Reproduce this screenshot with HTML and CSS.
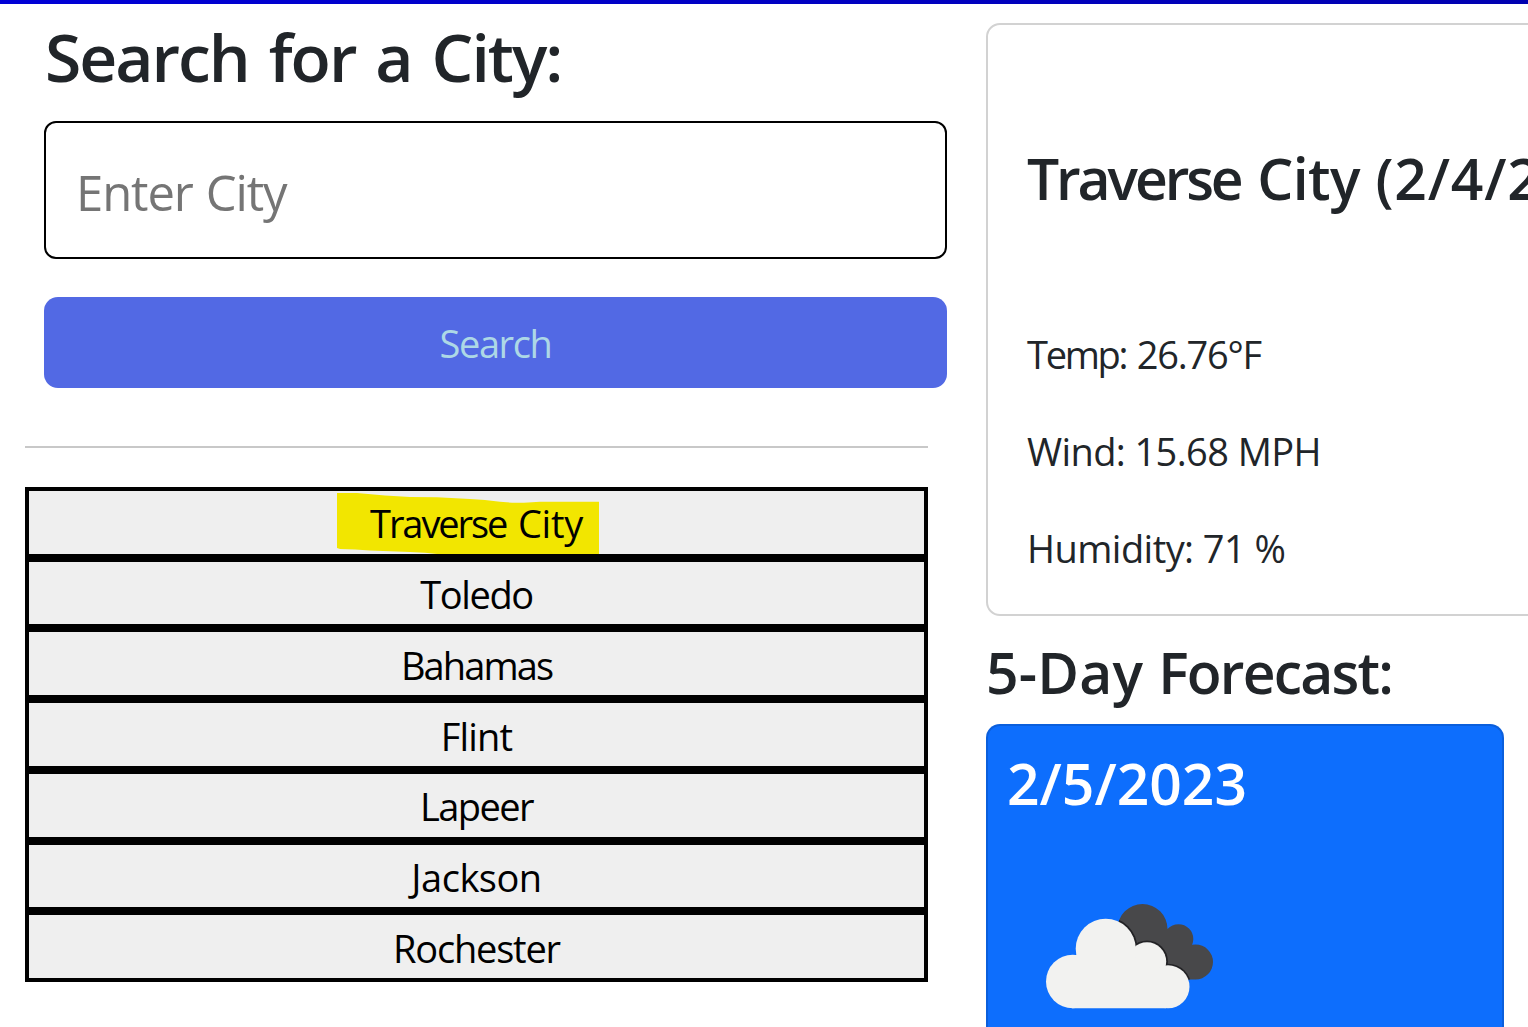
FILE: index.html
```html
<!DOCTYPE html>
<html lang="en">
<head>
<meta charset="utf-8">
<title>Weather Dashboard</title>
<link rel="stylesheet" href="styles.css">
</head>
<body>
<header class="banner"></header>
<main class="layout">
  <aside class="sidebar">
    <form class="search">
      <h1 class="search-title">Search for a City:</h1>
      <input class="search-input" type="text" placeholder="Enter City">
      <button class="search-button" type="button">Search</button>
    </form>
    <hr class="divider">
    <div class="history">
      <button class="city">
        <svg class="marker" viewBox="337 491 262 63"><path d="M337 493H357L385 495.500 410 497 437 497.200 470 499 485 500 500 501.800 512 502.700H524L540 501.800H599V554H437L425 552.800 410 552 390 551.300 370 550.500 355 549.500 340 549 337 548Z" fill="#f2e600"/></svg>
        <span class="label"><span class="t-traverse">Traverse </span><span class="t-city">City</span></span>
      </button>
      <button class="city"><span class="label t-toledo">Toledo</span></button>
      <button class="city"><span class="label t-bahamas">Bahamas</span></button>
      <button class="city"><span class="label t-flint">Flint</span></button>
      <button class="city"><span class="label t-lapeer">Lapeer</span></button>
      <button class="city"><span class="label t-jackson">Jackson</span></button>
      <button class="city"><span class="label t-rochester">Rochester</span></button>
    </div>
  </aside>
  <section class="content">
    <article class="today">
      <h2 class="today-title"><span class="h-traverse">Traverse </span><span class="h-city">City </span><span class="h-date">(2/4/2023)</span></h2>
      <p class="reading r-temp"><span class="r-label">Temp: </span>26.76°F</p>
      <p class="reading r-wind">Wind: 15.68 MPH</p>
      <p class="reading r-humidity">Humidity: 71 %</p>
    </article>
    <h2 class="forecast-title"><span class="h-five">5-Day </span>Forecast:</h2>
    <article class="day">
      <h3 class="day-date">2/5/2023</h3>
      <svg class="day-icon" viewBox="0 0 220 147">
        <clipPath id="rear"><circle cx="122.500" cy="49" r="25"/><circle cx="158.500" cy="59" r="14.800"/><circle cx="175.500" cy="82" r="17.500"/><path d="M110 50H150L175 70V99.500H120Z"/></clipPath>
        <g clip-path="url(#rear)">
          <rect x="90" y="20" width="110" height="90" fill="#48484a"/>
          <g fill="#222225"><circle cx="85.700" cy="68.700" r="31.800"/><circle cx="127" cy="81.500" r="21"/><circle cx="148" cy="107" r="23.300"/></g>
        </g>
        <g fill="#f2f2f0"><circle cx="52.800" cy="101.500" r="26.800"/><circle cx="85.700" cy="68.700" r="30"/><circle cx="127" cy="81.500" r="19.200"/><circle cx="148" cy="106.800" r="21.500"/><path d="M52 128.300V75H110L146 90V128.300Z"/></g>
      </svg>
    </article>
  </section>
</main>
</body>
</html>
```
FILE: styles.css
```css
* { box-sizing: border-box; }
html, body { height: 100%; }
body {
  margin: 0;
  overflow: hidden;
  background: #fff;
  color: #212529;
  font-family: "Open Sans", "Noto Sans", sans-serif;
  font-size: 38px;
}
h1, h2, h3, p { margin: 0; white-space: nowrap; }
h1, h2, h3 { font-weight: 600; }
p { font-weight: 400; }
button, input { font: inherit; }
.banner { height: 4px; background: linear-gradient(90deg, #0000d6, #0000b0); }
.layout { display: flex; align-items: flex-start; height: 1023px; overflow: hidden; }
.sidebar { flex: none; width: 986px; padding: 12px 0 0 25px; }
.search { display: flex; flex-direction: column; width: 903px; margin-left: 19px; }
.search-title { padding-left: 1px; font-size: 66px; line-height: 80px; letter-spacing: -2px; word-spacing: 4.8px; }
.search-input {
  height: 138px;
  margin-top: 25px;
  padding: 3px 30px 0;
  border: 2px solid #000;
  border-radius: 12px;
  background: #fff;
  font-size: 49px;
  letter-spacing: -1.1px;
  word-spacing: 1.3px;
}
.search-input::placeholder { color: #757575; opacity: 1; }
.search-button {
  height: 91px;
  margin-top: 38px;
  padding: 1px 0 0;
  border: 0;
  border-radius: 14px;
  background: #5269e4;
  color: #add8e6;
  letter-spacing: -1.4px;
}
.divider { width: 903px; height: 2px; margin: 58px 0 39px; border: 0; background: #c8c8c8; }
.history { display: flex; flex-direction: column; width: 903px; height: 495px; }
.city {
  position: relative;
  flex: 1;
  min-height: 0;
  padding: 2px 0 0;
  border: 4px solid #000;
  background: #efefef;
  color: #000;
  line-height: 52px;
}
.marker { position: absolute; left: 308px; top: 0; width: 262px; height: 63px; }
.label { position: relative; }
.t-traverse { letter-spacing: -2.1px; word-spacing: 4px; }
.t-city { letter-spacing: -.3px; }
.t-toledo { letter-spacing: -1.4px; }
.t-bahamas { letter-spacing: -1.9px; }
.t-flint { letter-spacing: -.8px; }
.t-lapeer { letter-spacing: -1.6px; }
.t-jackson { letter-spacing: -.5px; }
.t-rochester { letter-spacing: -1.2px; }
.content { flex: none; width: 1100px; padding-top: 19px; }
.today {
  height: 593px;
  padding: 113px 39px 0;
  border: 2px solid #d2d2d2;
  border-radius: 14px;
}
.today-title { margin-bottom: 109px; font-size: 57px; line-height: 80px; }
.h-traverse { letter-spacing: -3.1px; word-spacing: 5px; }
.h-city { letter-spacing: -.6px; word-spacing: 1.3px; }
.h-date { letter-spacing: .8px; }
.reading { height: 97px; line-height: 54px; }
.r-temp { letter-spacing: -1.25px; }
.r-label { letter-spacing: -2.3px; word-spacing: 3px; }
.r-wind { letter-spacing: -.6px; }
.r-humidity { letter-spacing: -.55px; }
.forecast-title { padding: 16px 0 12px; font-size: 57px; line-height: 80px; letter-spacing: -1.8px; }
.h-five { letter-spacing: .2px; }
.day {
  width: 518px;
  height: 320px;
  padding: 17px 19px;
  border: 2px solid #0b5fdc;
  border-bottom: 0;
  border-radius: 14px 14px 0 0;
  background: #0d6efd;
  color: #fff;
}
.day-date { font-size: 57px; line-height: 80px; letter-spacing: 0; }
.day-icon { display: block; width: 220px; height: 147px; margin: 57px 0 0 13px; }
```
